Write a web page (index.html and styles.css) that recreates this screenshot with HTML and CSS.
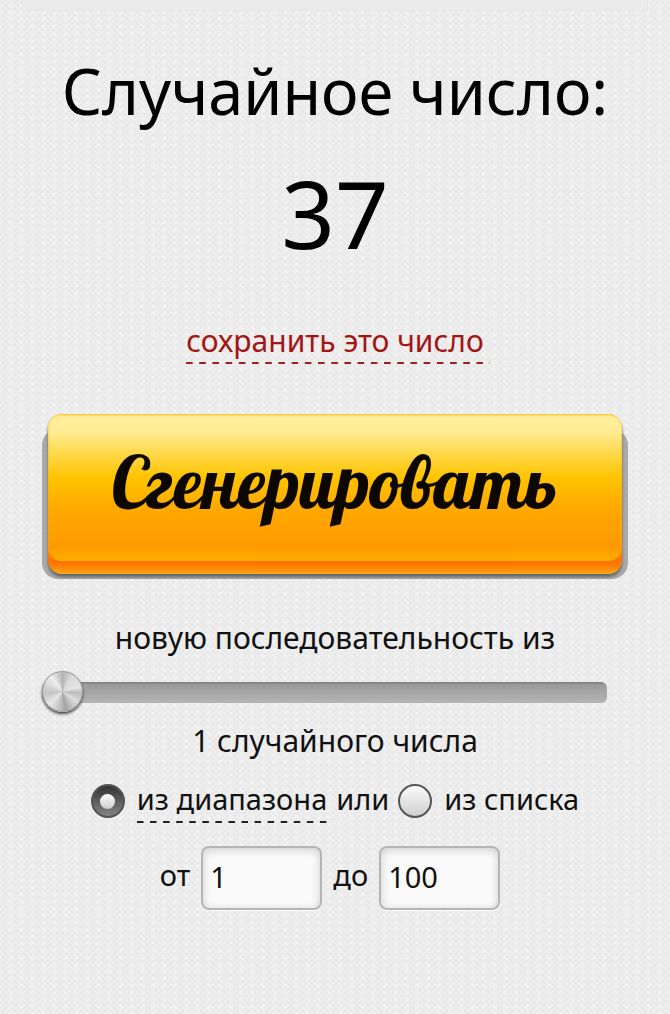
FILE: index.html
```html
<!DOCTYPE html>
<html lang="ru">
<head>
<meta charset="utf-8">
<meta name="viewport" content="width=device-width">
<title>Случайное число</title>
<link rel="stylesheet" href="styles.css">
</head>
<body>
<div class="top-panel"></div>
<main class="page">
  <h1 class="title">Случайное число:</h1>
  <output class="number">37</output>
  <a class="save" href="#save">сохранить это число</a>
  <form class="generator">
    <button class="generate" type="button"><span class="lip"><span class="face">Сгенерировать</span></span></button>
    <label class="line" for="count">новую последовательность из</label>
    <input class="slider" id="count" type="range" min="1" max="100" value="1">
    <p class="line count">1 случайного числа</p>
    <div class="source">
      <input class="radio" type="radio" name="source" id="range" checked>
      <label class="dashed" for="range">из диапазона</label>
      <span class="or">или</span>
      <input class="radio" type="radio" name="source" id="list">
      <label for="list">из списка</label>
    </div>
    <div class="bounds">
      <label for="from">от</label>
      <input class="field" id="from" type="text" value="1">
      <label for="to">до</label>
      <input class="field" id="to" type="text" value="100">
    </div>
  </form>
</main>
</body>
</html>
```
FILE: styles.css
```css
* {
  box-sizing: border-box;
}

body {
  margin: 0;
  min-height: 100vh;
  background-color: #eeeeee;
  background-image:
    radial-gradient(circle at 50% 50%, rgba(0, 0, 0, 0.022) 0 1px, transparent 2px),
    radial-gradient(circle at 50% 50%, rgba(0, 0, 0, 0.022) 0 1px, transparent 2px),
    radial-gradient(circle at 50% 50%, rgba(255, 255, 255, 0.4) 0 1px, transparent 3px);
  background-position: 0 0, 3px 3px, 5px 2px;
  background-size: 6px 6px, 6px 6px, 11px 7px;
  color: #111;
  font-family: "Noto Sans", "Open Sans", sans-serif;
  font-size: 30px;
  line-height: 40px;
}

.top-panel {
  height: 11px;
  margin: 0 22px;
  background: #ececec;
  border: 1px solid #e6e6e6;
  border-top: 0;
}

.page {
  display: flex;
  flex-direction: column;
  align-items: center;
  padding: 40px 42px;
}

.title {
  margin: 0;
  color: #000;
  font-size: 63px;
  font-weight: 400;
  line-height: 80px;
  white-space: nowrap;
}

.number {
  margin-top: 22px;
  color: #000;
  font-size: 94px;
  line-height: 120px;
}

.save {
  margin: 48px -6px 0 0;
  padding: 0 6px 3px 0;
  background: linear-gradient(90deg, #9c1f22 0 52%, transparent 52%) 0 100% / 13px 2px;
  background-repeat: round no-repeat;
  color: #a31515;
  text-decoration: none;
}

.generator {
  display: flex;
  flex-direction: column;
  align-items: center;
  width: 100%;
  margin-top: 50px;
}

.generate {
  position: relative;
  z-index: 0;
  width: 100%;
  padding: 0 6px 5px;
  border: 0;
  background: transparent;
  cursor: pointer;
}

.generate::before {
  content: "";
  position: absolute;
  z-index: -1;
  inset: 15px 0 0;
  border-radius: 16px;
  background: #a9a9a9;
}

.lip {
  display: block;
  padding-bottom: 13px;
  border-radius: 14px;
  background: linear-gradient(#ffe88b 30%, #ff9900 80%, #ff7000 92%, #ff8000 95%, #ffa51c);
  box-shadow: 0 3px 3px #666;
}

.face {
  display: block;
  padding: 13px 0 24px;
  border-radius: 14px;
  background: linear-gradient(#f9d84e 0, #ffee9c 3px, #ffec94 18px, #fdda4e 38px, #ffc300 64px, #ffa900 94px, #ff9900 134px, #ffb000 100%);
  box-shadow: inset 0 0 2px #e6a800;
  color: #0c0800;
  font: 400 72px/110px "Lobster", "Liberation Serif", serif;
}

.line {
  margin: 39px 0 0;
}

.slider {
  appearance: none;
  width: 100%;
  height: 46px;
  margin: 11px 0 0;
  padding-right: 21px;
  background: transparent;
}

.slider::-webkit-slider-runnable-track {
  height: 21px;
  border-radius: 6px;
  background: linear-gradient(#7c7c7c, #9c9c9c 3px, #b4b4b4);
}

.slider::-webkit-slider-thumb {
  appearance: none;
  width: 41px;
  height: 41px;
  margin-top: -11px;
  border: 1px solid #999;
  border-radius: 50%;
  background: conic-gradient(#b4b4b4, #d8d8d8 30deg, #e4e4e4 75deg, #bbb 95deg, #ddd 125deg, #a4a4a4 170deg, #bbb 185deg, #e6e6e6 225deg, #c4c4c4 265deg, #ddd 300deg, #eee 325deg, #b4b4b4);
  box-shadow: 0 2px 3px #444;
}

.line.count {
  margin-top: 6px;
}

.source {
  display: flex;
  align-items: center;
  margin-top: 18px;
  font-size: 29px;
  white-space: nowrap;
}

.radio {
  appearance: none;
  flex: none;
  width: 34px;
  height: 34px;
  margin: 4px 12px 0 0;
  border: 2px solid #555;
  border-radius: 50%;
  background: linear-gradient(#fbfbfb, #cfcfcf);
}

.radio:checked {
  display: grid;
  place-items: center;
  background: linear-gradient(#333, #858585);
}

.radio:checked::before {
  content: "";
  width: 15px;
  height: 15px;
  border-radius: 50%;
  background: linear-gradient(#fff, #ccc);
}

.dashed {
  margin: 0 -6px -4px 0;
  padding: 0 6px 4px 0;
  background: linear-gradient(90deg, #222 0 52%, transparent 52%) 0 100% / 13px 2px;
  background-repeat: round no-repeat;
}

.or {
  margin: 0 9px;
}

.bounds {
  display: flex;
  align-items: center;
  margin-top: 27px;
  padding-right: 21px;
  font-size: 29px;
}

.bounds label {
  margin: 0 11px;
  padding-bottom: 6px;
}

.field {
  width: 121px;
  height: 64px;
  padding: 0 7px 3px;
  border: 2px solid #b5b5b5;
  border-radius: 8px;
  background: #fafafa;
  box-shadow: inset 0 2px 9px #ccc, 0 1px 1px #fff;
  color: #111;
  font: inherit;
}
```
